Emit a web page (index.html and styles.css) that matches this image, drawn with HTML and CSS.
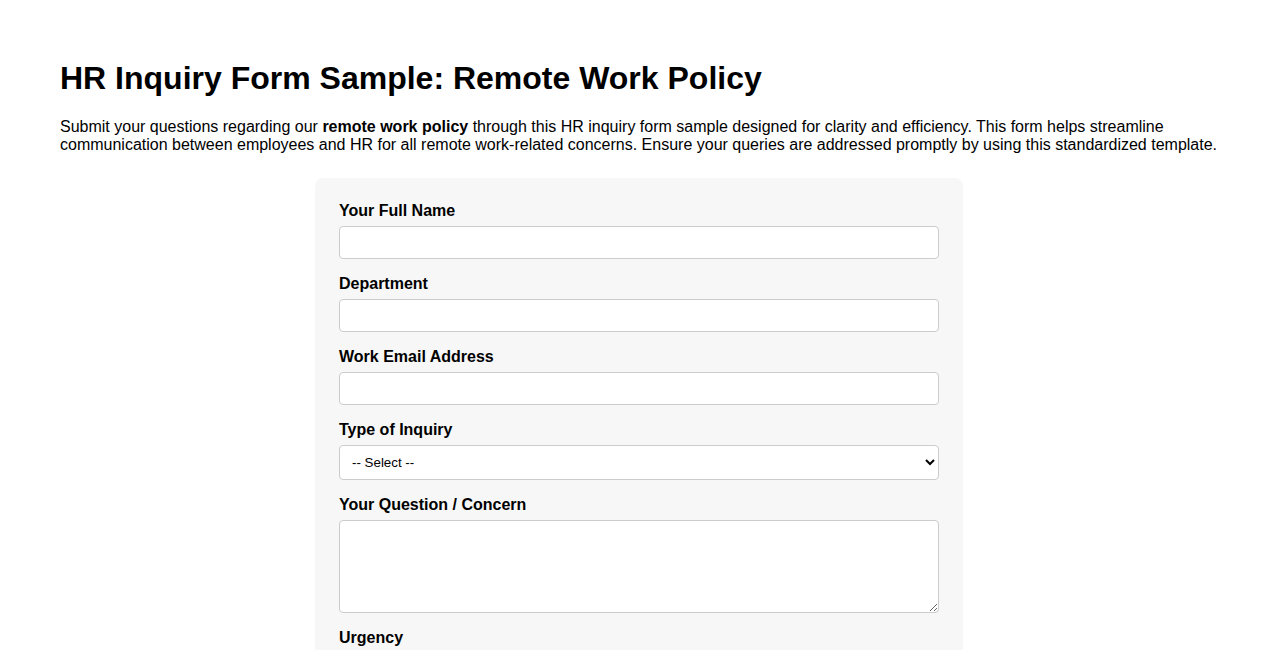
FILE: index.html
```html
<!DOCTYPE html>
<html lang="en">
<head>
<meta charset="utf-8">
<title>HR Inquiry Form Sample: Remote Work Policy</title>
<link rel="stylesheet" href="styles.css">
</head>
<body>
<div class="page">
  <h1 class="title">HR Inquiry Form Sample: Remote Work Policy</h1>
  <p class="intro">Submit your questions regarding our <strong>remote work policy</strong> through this HR inquiry form sample designed for clarity and efficiency. This form helps streamline communication between employees and HR for all remote work-related concerns. Ensure your queries are addressed promptly by using this standardized template.</p>
  <form class="form">
    <label class="label" for="name">Your Full Name</label>
    <input class="field" type="text" id="name">
    <label class="label" for="dept">Department</label>
    <input class="field" type="text" id="dept">
    <label class="label" for="email">Work Email Address</label>
    <input class="field" type="email" id="email">
    <label class="label" for="type">Type of Inquiry</label>
    <select class="field select" id="type">
      <option>-- Select --</option>
      <option>Eligibility</option>
      <option>Equipment</option>
      <option>Schedule</option>
      <option>Other</option>
    </select>
    <label class="label" for="question">Your Question / Concern</label>
    <textarea class="field area" id="question" rows="5"></textarea>
    <label class="label" for="urgency">Urgency</label>
    <select class="field select" id="urgency">
      <option>Low</option>
      <option>Medium</option>
      <option>High</option>
    </select>
    <button class="submit" type="button">Submit Inquiry</button>
  </form>
</div>
</body>
</html>
```
FILE: styles.css
```css
html, body {
  margin: 0;
  padding: 0;
  background: #ffffff;
}
body {
  font-family: "Liberation Sans", Arial, sans-serif;
  font-size: 16px;
  color: #000;
}
.page {
  padding: 38px 60px 40px;
}
.title {
  font-size: 32px;
  font-weight: bold;
  margin: 21.5px 0 21.5px;
}
.intro {
  margin: 0 0 24px;
  line-height: 18px;
}
.form {
  box-sizing: border-box;
  max-width: 648px;
  margin: 0 auto;
  padding: 24px;
  background: #f7f7f7;
  border-radius: 8px;
  display: flex;
  flex-direction: column;
}
.label {
  display: block;
  font-weight: bold;
  line-height: 18px;
  margin: 0 0 6px;
}
.field {
  box-sizing: border-box;
  width: 100%;
  height: 33px;
  margin: 0 0 16px;
  padding: 8px;
  border: 1px solid #cccccc;
  border-radius: 4px;
  background: #ffffff;
  font-family: "Liberation Sans", Arial, sans-serif;
  font-size: 13.33px;
}
.select {
  height: 35px;
  padding: 0 8px;
  color: #000;
}
.area {
  height: 93px;
  resize: vertical;
}
.submit {
  align-self: flex-start;
  padding: 10px 20px;
  border: 0;
  border-radius: 4px;
  background: #0066cc;
  color: #fff;
  font-size: 16px;
  font-family: "Liberation Sans", Arial, sans-serif;
}
```
